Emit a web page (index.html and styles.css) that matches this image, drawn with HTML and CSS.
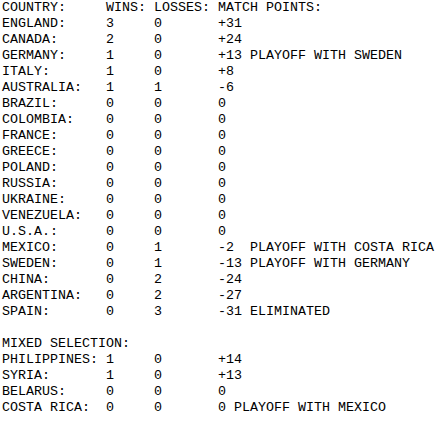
FILE: index.html
```html
<!DOCTYPE html>
<html>
<head>
<meta charset="utf-8">
<link rel="stylesheet" href="styles.css">
</head>
<body>
<div class="standings">
  <div class="row head"><span>COUNTRY:</span><span>WINS:</span><span>LOSSES:</span><span>MATCH POINTS:</span></div>
  <div class="row"><span>ENGLAND:</span><span>3</span><span>0</span><span>+31</span></div>
  <div class="row"><span>CANADA:</span><span>2</span><span>0</span><span>+24</span></div>
  <div class="row"><span>GERMANY:</span><span>1</span><span>0</span><span>+13 PLAYOFF WITH SWEDEN</span></div>
  <div class="row"><span>ITALY:</span><span>1</span><span>0</span><span>+8</span></div>
  <div class="row"><span>AUSTRALIA:</span><span>1</span><span>1</span><span>-6</span></div>
  <div class="row"><span>BRAZIL:</span><span>0</span><span>0</span><span>0</span></div>
  <div class="row"><span>COLOMBIA:</span><span>0</span><span>0</span><span>0</span></div>
  <div class="row"><span>FRANCE:</span><span>0</span><span>0</span><span>0</span></div>
  <div class="row"><span>GREECE:</span><span>0</span><span>0</span><span>0</span></div>
  <div class="row"><span>POLAND:</span><span>0</span><span>0</span><span>0</span></div>
  <div class="row"><span>RUSSIA:</span><span>0</span><span>0</span><span>0</span></div>
  <div class="row"><span>UKRAINE:</span><span>0</span><span>0</span><span>0</span></div>
  <div class="row"><span>VENEZUELA:</span><span>0</span><span>0</span><span>0</span></div>
  <div class="row"><span>U.S.A.:</span><span>0</span><span>0</span><span>0</span></div>
  <div class="row"><span>MEXICO:</span><span>0</span><span>1</span><span>-2  PLAYOFF WITH COSTA RICA</span></div>
  <div class="row"><span>SWEDEN:</span><span>0</span><span>1</span><span>-13 PLAYOFF WITH GERMANY</span></div>
  <div class="row"><span>CHINA:</span><span>0</span><span>2</span><span>-24</span></div>
  <div class="row"><span>ARGENTINA:</span><span>0</span><span>2</span><span>-27</span></div>
  <div class="row"><span>SPAIN:</span><span>0</span><span>3</span><span>-31 ELIMINATED</span></div>
</div>
<div class="standings section">
  <div class="title">MIXED SELECTION:</div>
  <div class="row"><span>PHILIPPINES:</span><span>1</span><span>0</span><span>+14</span></div>
  <div class="row"><span>SYRIA:</span><span>1</span><span>0</span><span>+13</span></div>
  <div class="row"><span>BELARUS:</span><span>0</span><span>0</span><span>0</span></div>
  <div class="row"><span>COSTA RICA:</span><span>0</span><span>0</span><span>0 PLAYOFF WITH MEXICO</span></div>
</div>
</body>
</html>
```
FILE: styles.css
```css
html, body {
  margin: 0;
  padding: 0;
  background: #ffffff;
}
body {
  font-family: "Courier New", "Liberation Mono", monospace;
  font-size: 13.3333px;
  line-height: 16px;
  color: #000000;
  padding-left: 2px;
}
.standings {
  display: flex;
  flex-direction: column;
}
.section {
  margin-top: 16px;
}
.row {
  display: grid;
  grid-template-columns: 104px 48px 64px auto;
  white-space: pre;
}
.title {
  white-space: pre;
}
```
